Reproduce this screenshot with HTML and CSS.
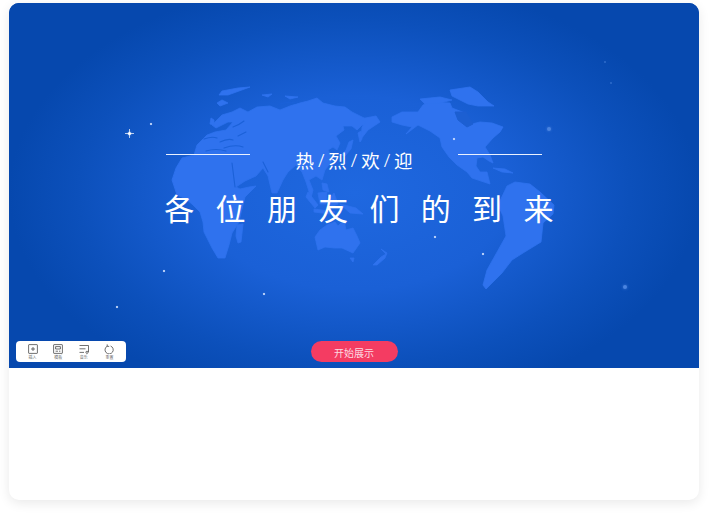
FILE: index.html
```html
<!DOCTYPE html>
<html lang="zh">
<head>
<meta charset="utf-8">
<title>热烈欢迎</title>
<link rel="stylesheet" href="styles.css">
</head>
<body>
<main class="card">
  <section class="slide">
    <svg class="map" viewBox="9 3 690 365" aria-hidden="true">
      <g class="land">
        <path d="M182 158L176 168L172 180L177 195L186 199L193 205L200 212L203 222L204 232L212 248L218 258L225 258L229 245L232 233L239 222L241 213L245 197L256 186L249 187L240 189L236 187L245 181L256 176L263 168L268 176L272 193L277 193L283 180L288 172L296 165L302 172L306 182L311 198L313 190L309 180L316 176L322 180L325 170L333 160L328 150L333 147L337 150L340 143L336 136L344 130L343 126L352 126L357 130L362 125L365 126L368 120L352 112L345 107L335 106L323 103L317 98L308 101L300 103L290 106L280 110L270 106L257 107L248 112L240 108L232 112L222 115L212 125L216 128L228 122L233 122L226 130L215 132L207 135L197 145L194 155Z"/>
        <path d="M250 87L238 88L222 91L219 95L228 95Z"/>
        <path d="M222 100L217 103L220 106L228 103Z"/>
        <path d="M262 95L272 94L268 97Z"/>
        <path d="M285 96L298 97L290 99Z"/>
        <path d="M211 118L214 120L214 125L210 124Z"/>
        <path d="M345 156L351 149L353 140L349 142L346 150L341 155Z"/>
        <path d="M358 133L361 131L362 139L360 142Z"/>
        <path d="M322 183L327 184L329 192L323 190Z"/>
        <path d="M308 192L318 205L315 208L306 197Z"/>
        <path d="M318 193L327 192L326 204L320 204Z"/>
        <path d="M329 200L334 193L338 204L331 207Z"/>
        <path d="M314 209L335 212L330 214L314 212Z"/>
        <path d="M340 204L356 208L363 214L350 213Z"/>
        <path d="M315 237L320 230L327 225L335 222L338 226L344 220L346 230L353 228L357 236L360 243L353 253L342 248L335 248L325 247L318 250Z"/>
        <path d="M350 258L354 258L353 262Z"/>
        <path d="M373 265L381 257L386 254L381 249L387 253L385 258L377 265Z"/>
        <path d="M237 225L243 224L241 242L238 243L236 236Z"/>
        <path d="M392 117L402 112L418 112L423 105L430 102L450 103L452 108L465 113L472 124L480 122L492 123L503 127L500 132L493 138L485 147L490 155L493 163L489 161L483 157L477 158L476 166L480 172L487 172L490 184L484 182L472 178L467 172L457 165L449 157L442 147L440 138L430 131L418 125L406 134L412 127L402 125L392 122Z"/>
        <path d="M450 90L470 87L478 92L488 102L494 106L478 106L468 104L452 96Z"/>
        <path d="M420 99L440 97L452 100L440 103L425 104Z"/>
        <path d="M360 119L376 116L380 122L368 130L361 139L362 127L366 122Z"/>
        <path d="M493 168L505 169L513 173L502 172Z"/>
        <path d="M507 186L515 182L530 184L540 192L554 205L553 214L543 223L541 242L523 253L512 260L502 273L486 289L483 285L487 270L506 236L503 216L498 205Z"/>
      </g>
      <path class="sea" d="M232 163L235 187"/>
      <path class="sea" d="M204 139Q212 136 217 138M220 142Q228 138 233 140M224 148Q235 144 243 147M206 151Q216 148 226 151M238 136L246 132M233 127Q239 125 244 121M280 104Q288 101 296 103"/>
      <path class="sea" d="M263 162L268 172"/>
      <path class="sea-fill" d="M455 112L466 112L473 124L467 127L458 120Z"/>
    </svg>
    <div class="stars" aria-hidden="true">
      <i class="star big s1"></i><i class="star s2"></i><i class="star s3"></i><i class="star s4"></i>
      <i class="star s5"></i><i class="star s6"></i><i class="star s7"></i><i class="star soft s8"></i>
      <i class="star soft s9"></i><i class="star dim s10"></i><i class="star dim s11"></i><i class="star s12"></i>
    </div>
    <div class="hero">
      <div class="welcome-row">
        <span class="rule"></span>
        <h2 class="welcome">热<em>/</em>烈<em>/</em>欢<em>/</em>迎</h2>
        <span class="rule"></span>
      </div>
      <h1 class="title">各位朋友们的到来</h1>
    </div>
    <footer class="controls">
      <nav class="toolbar">
        <div class="tool">
          <svg viewBox="0 0 10 10"><rect x="0.6" y="0.6" width="8.8" height="8.8" rx="0.5"/><path d="M5 3V7M3 5H7"/></svg>
          <span>插入</span>
        </div>
        <div class="tool">
          <svg viewBox="0 0 10 10"><rect x="0.6" y="0.6" width="8.8" height="8.8" rx="0.5"/><path d="M2.6 2.6H7.4V5H2.6ZM2.6 7.2H5M6 7.2H7.4"/></svg>
          <span>模板</span>
        </div>
        <div class="tool">
          <svg viewBox="0 0 10 10"><path d="M0.5 1.5H9.5V8M0.5 4.8H6.5M0.5 8.4H5"/><circle cx="8" cy="8.3" r="1.1"/></svg>
          <span>音乐</span>
        </div>
        <div class="tool">
          <svg viewBox="0 0 10 10"><path d="M3.2 2.2A4.1 4.1 0 1 0 6.6 2"/><path d="M3.2 0.4V2.4H5.2"/></svg>
          <span>重置</span>
        </div>
      </nav>
      <button class="start">开始展示</button>
      <span class="spacer"></span>
    </footer>
  </section>
</main>
</body>
</html>
```
FILE: styles.css
```css
* { box-sizing: border-box; }
html, body { margin: 0; padding: 0; background: #fff; }
body {
  width: 709px;
  height: 515px;
  padding: 3px 10px 0 9px;
  overflow: hidden;
  font-family: "Noto Sans CJK SC", "Noto Sans", sans-serif;
}
.card {
  height: 497px;
  background: #fff;
  border-radius: 10px;
  box-shadow: 0 3px 12px rgba(0, 0, 0, 0.09);
  overflow: hidden;
}
.slide {
  position: relative;
  height: 365px;
  display: flex;
  flex-direction: column;
  overflow: hidden;
  background:
    radial-gradient(ellipse 345px 215px at 50% 52%, #1f68e0 0%, #1a60d6 45%, #0c50bb 80%, #0648ae 100%);
  background-color: #0648ae;
}
.map { position: absolute; inset: 0; width: 100%; height: 100%; }
.land { fill: #2f72ee; stroke: #2f72ee; stroke-width: 0.8; stroke-linejoin: round; }
.sea { fill: none; stroke: #1b61d8; stroke-width: 1.1; stroke-linecap: round; }
.sea-fill { fill: #1c5fd2; stroke: #1c5fd2; stroke-linejoin: round; }
.stars { position: absolute; inset: 0; }
.star {
  position: absolute;
  width: 2px;
  height: 2px;
  border-radius: 50%;
  background: #cfe0ff;
  box-shadow: 0 0 1px rgba(255,255,255,0.5);
}
.big { width: 3px; height: 3px; background: #fff; box-shadow: 0 0 2px rgba(255,255,255,0.8); }
.big::before, .big::after {
  content: "";
  position: absolute;
  background: rgba(255,255,255,0.7);
}
.big::before { left: -3px; right: -3px; top: 1px; height: 1px; }
.big::after { top: -3px; bottom: -3px; left: 1px; width: 1px; }
.soft { width: 4px; height: 4px; background: #4a84e0; box-shadow: 0 0 3px #3f7ada; }
.dim { width: 2px; height: 2px; background: #2f6ccb; box-shadow: none; }
.s1 { left: 119px; top: 129px; }
.s2 { left: 141px; top: 120px; }
.s3 { left: 154px; top: 267px; }
.s4 { left: 107px; top: 303px; }
.s5 { left: 254px; top: 290px; }
.s6 { left: 425px; top: 233px; }
.s7 { left: 473px; top: 250px; }
.s8 { left: 614px; top: 282px; }
.s9 { left: 538px; top: 124px; }
.s10 { left: 595px; top: 58px; }
.s11 { left: 601px; top: 79px; }
.s12 { left: 444px; top: 135px; }
.hero {
  position: relative;
  flex: 1;
  padding: 145px 0 0;
  display: flex;
  flex-direction: column;
  align-items: center;
  color: #fff;
}
.welcome-row {
  width: 376px;
  display: flex;
  justify-content: space-between;
  align-items: flex-start;
}
.rule {
  width: 84px;
  height: 1px;
  margin-top: 6px;
  background: #eaf1ff;
}
.welcome {
  margin: 0;
  font-size: 18.5px;
  line-height: 24px;
  font-weight: 400;
  display: flex;
  gap: 2.2px;
}
.welcome em { font-style: normal; font-family: "Noto Sans", sans-serif; font-weight: 300; width: 10px; text-align: center; }
.title {
  margin: 13px 0 0;
  font-size: 30px;
  line-height: 44px;
  font-weight: 400;
  letter-spacing: 21.3px;
  white-space: nowrap;
  padding-left: 31px;
}
.controls {
  position: relative;
  display: grid;
  grid-template-columns: 1fr auto 1fr;
  align-items: center;
  padding: 0 7px;
  margin-bottom: 6px;
}
.toolbar {
  width: 110px;
  height: 21px;
  padding: 3px 4px 0;
  background: #fff;
  border-radius: 4px;
  display: flex;
  justify-content: space-between;
}
.tool {
  width: 25px;
  display: flex;
  flex-direction: column;
  align-items: center;
  color: #444;
}
.tool svg {
  width: 10px;
  height: 10px;
  fill: none;
  stroke: #333;
  stroke-width: 0.7;
}
.tool span { font-size: 4px; line-height: 7px; color: #666; }
.start {
  width: 87px;
  height: 21px;
  border: 0;
  padding: 2px 0 0;
  border-radius: 11px;
  background: #f43c62;
  color: #fcd9e1;
  font: 400 10px/19px "Noto Sans CJK SC", sans-serif;
}
```
